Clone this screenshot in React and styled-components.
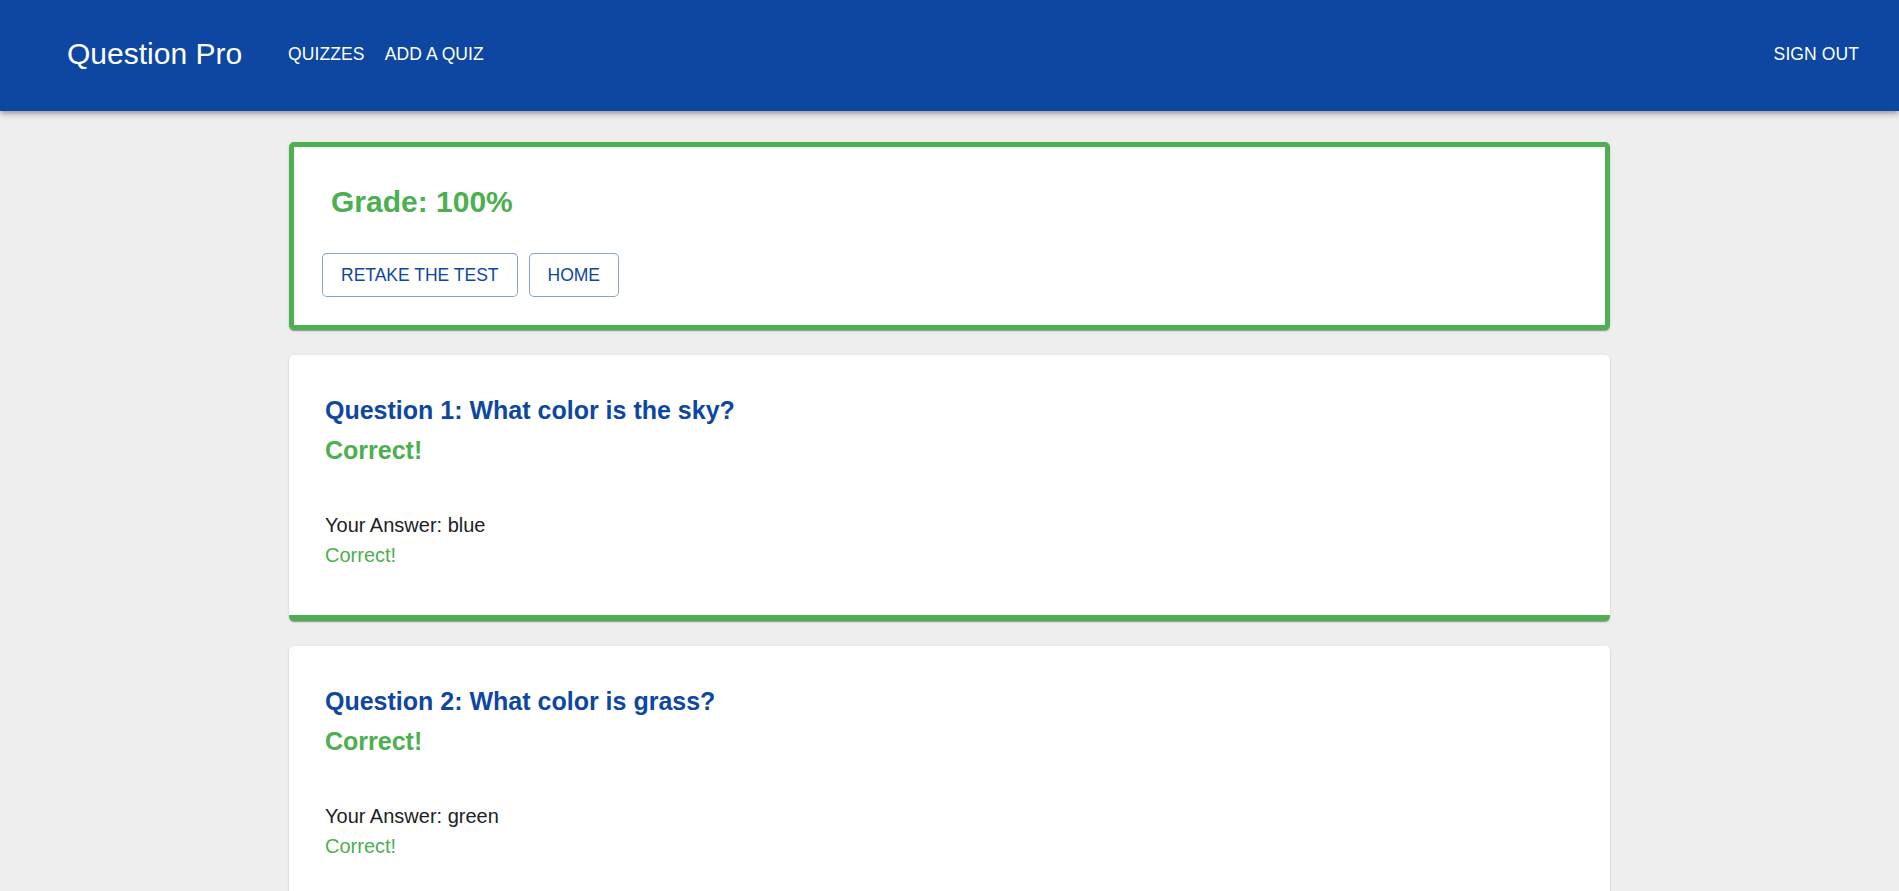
import React from 'react';
import styled, { createGlobalStyle } from 'styled-components';

const GlobalStyle = createGlobalStyle`
  body {
    margin: 0;
    background: #eeeeee;
    font-family: "Liberation Sans", Arial, sans-serif;
    color: #212121;
  }
`;

const Header = styled.header`
  height: 111px;
  background: #0d47a1;
  color: white;
  display: flex;
  align-items: center;
  padding: 0 30px 4px 67px;
  box-sizing: border-box;
  box-shadow: 0px 2px 4px -1px rgba(0, 0, 0, 0.2), 0px 4px 5px 0px rgba(0, 0, 0, 0.14),
    0px 1px 10px 0px rgba(0, 0, 0, 0.12);
  position: relative;
  z-index: 1;
`;

const Brand = styled.div`
  font-size: 30px;
  line-height: 40px;
  margin-right: 36px;
`;

const NavButton = styled.button`
  background: none;
  border: none;
  color: white;
  font-family: inherit;
  font-size: 17.5px;
  line-height: 30px;
  letter-spacing: 0.1px;
  text-transform: uppercase;
  padding: 7px 10px;
  cursor: pointer;
`;

const Spacer = styled.div`
  flex: 1;
`;

const Main = styled.main`
  width: 1321px;
  margin: 31px auto 0;
  display: flex;
  flex-direction: column;
  gap: 25px;
`;

const GradeCard = styled.section`
  background: white;
  border: 5px solid #4caf50;
  border-radius: 5px;
  padding: 35px 28px 28px;
  box-shadow: 0px 2px 1px -1px rgba(0, 0, 0, 0.2), 0px 1px 1px 0px rgba(0, 0, 0, 0.14),
    0px 1px 3px 0px rgba(0, 0, 0, 0.12);
`;

const Grade = styled.h2`
  margin: 0 0 31px;
  padding-left: 9px;
  font-size: 30px;
  line-height: 40px;
  font-weight: bold;
  color: #4caf50;
`;

const Actions = styled.div`
  display: flex;
  gap: 11px;
`;

const OutlineButton = styled.button`
  background: white;
  border: 1px solid rgba(13, 71, 161, 0.5);
  border-radius: 5px;
  color: #0d47a1;
  font-family: inherit;
  font-size: 17.5px;
  line-height: 30px;
  padding: 6px 18px;
  text-transform: uppercase;
  cursor: pointer;
`;

const QuestionCard = styled.article`
  background: white;
  border-radius: 5px;
  border-bottom: 6px solid ${p => (p.correct ? '#4caf50' : '#f44336')};
  padding: 36px 36px 45px;
  box-shadow: 0px 2px 1px -1px rgba(0, 0, 0, 0.2), 0px 1px 1px 0px rgba(0, 0, 0, 0.14),
    0px 1px 3px 0px rgba(0, 0, 0, 0.12);
`;

const QuestionTitle = styled.h3`
  margin: 0;
  font-size: 25px;
  line-height: 39px;
  font-weight: bold;
  color: #0d47a1;
`;

const Verdict = styled.div`
  font-size: 25px;
  line-height: 40px;
  font-weight: bold;
  color: ${p => (p.correct ? '#4caf50' : '#f44336')};
`;

const AnswerBlock = styled.div`
  margin-top: 40px;
`;

const AnswerLine = styled.div`
  font-size: 20px;
  line-height: 30px;
  color: ${p => p.color || '#212121'};
`;

const questions = [
  { q: 'What color is the sky?', answer: 'blue', correct: true },
  { q: 'What color is grass?', answer: 'green', correct: true },
];

export default function App() {
  return (
    <>
      <GlobalStyle />
      <Header>
        <Brand>Question Pro</Brand>
        <NavButton>Quizzes</NavButton>
        <NavButton>Add a Quiz</NavButton>
        <Spacer />
        <NavButton>Sign Out</NavButton>
      </Header>
      <Main>
        <GradeCard>
          <Grade>Grade: 100%</Grade>
          <Actions>
            <OutlineButton>Retake the test</OutlineButton>
            <OutlineButton>Home</OutlineButton>
          </Actions>
        </GradeCard>
        {questions.map((item, i) => (
          <QuestionCard key={i} correct={item.correct}>
            <QuestionTitle>
              Question {i + 1}: {item.q}
            </QuestionTitle>
            <Verdict correct={item.correct}>{item.correct ? 'Correct!' : 'Incorrect'}</Verdict>
            <AnswerBlock>
              <AnswerLine>Your Answer: {item.answer}</AnswerLine>
              <AnswerLine color={item.correct ? '#4caf50' : '#f44336'}>
                {item.correct ? 'Correct!' : 'Incorrect'}
              </AnswerLine>
            </AnswerBlock>
          </QuestionCard>
        ))}
      </Main>
    </>
  );
}
